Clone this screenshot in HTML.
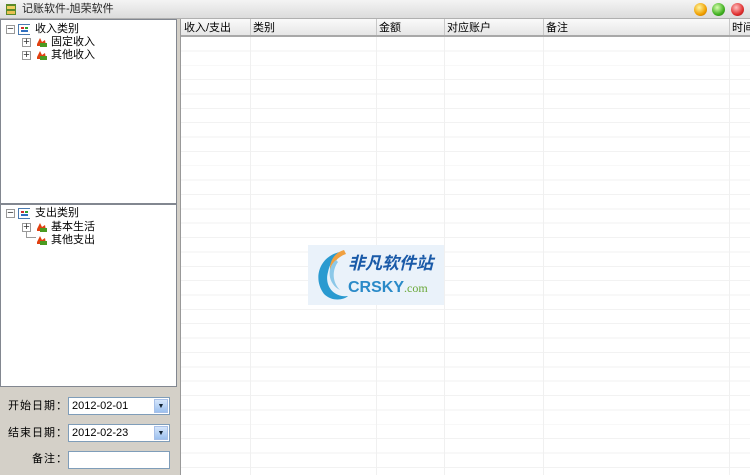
<!DOCTYPE html>
<html><head><meta charset="utf-8"><style>
*{margin:0;padding:0;box-sizing:border-box}
body{width:750px;height:475px;overflow:hidden;background:#d4d0c8;font-family:"Liberation Sans","Noto Sans CJK SC",sans-serif;font-size:11px;line-height:13px;color:#000;position:relative}
.abs{position:absolute;white-space:nowrap}
.title{left:0;top:0;width:750px;height:19px;background:linear-gradient(#f4f4f4,#dcdcdc);border-bottom:1px solid #b0b0b0}
.title span{position:absolute;left:22px;top:3px;font-size:11px;color:#222}
.btn{position:absolute;top:3px;width:13px;height:13px;border-radius:50%}
.panel{background:#fff;border:1px solid #828790}
.tree div{position:absolute;white-space:nowrap;font-size:11px}
.pm{position:absolute;width:9px;height:9px;border:1px solid #999;background:#fff;font-size:9px;line-height:7px;text-align:center;color:#333}
.ico{position:absolute;width:12px;height:11px}
.grid{left:180px;top:19px;width:570px;height:456px;background:#fff repeating-linear-gradient(#fff 0 13.4px,#f2f2f2 13.4px 14.36px);background-position:0 18px;border-left:1px solid #999}
.hdr{position:absolute;left:0;top:0;width:570px;height:18px;background:linear-gradient(#fafafa,#e6e6e6);border-bottom:2px solid #a8a8a8;overflow:hidden}
.hdr span{position:absolute;top:3px;font-size:11px;white-space:nowrap}
.vl{position:absolute;top:0;width:1px;height:456px;background:#f0f0f0}
.hs{position:absolute;top:0;width:1px;height:17px;background:#c8c8c8}
.inp{position:absolute;background:#fff;border:1px solid #7f9db9;height:18px;font-size:11px;padding:2px 3px;width:102px;left:68px}
.dd{position:absolute;right:1px;top:1px;width:14px;height:14px;background:linear-gradient(#d6e6fb,#9cc0ef);border:1px solid #a8c0e8;font-size:7px;text-align:center;line-height:13px;color:#123}
.lbl{position:absolute;font-size:11px;letter-spacing:1px}
</style></head><body>
<div class="abs title">
<svg class="abs" style="left:5px;top:3px" width="12" height="13"><rect x="1" y="1" width="10" height="11" fill="#5a8a2a"/><rect x="2" y="3" width="8" height="3" fill="#f0d060"/><rect x="2" y="8" width="8" height="3" fill="#e8c050"/></svg>
<span>记账软件-旭荣软件</span>
<div class="btn" style="left:694px;background:radial-gradient(circle at 40% 35%,#fff6a0,#f0a000 60%,#b06000)"></div>
<div class="btn" style="left:712px;background:radial-gradient(circle at 40% 35%,#d8ffb0,#40b020 60%,#207010)"></div>
<div class="btn" style="left:731px;background:radial-gradient(circle at 40% 35%,#ffc0c0,#e03030 60%,#901010)"></div>
</div>

<div class="abs panel tree" style="left:0;top:19px;width:177px;height:185px">
<div class="pm" style="left:5px;top:5px">−</div>
<svg class="ico" style="left:17px;top:4px" width="13" height="11"><rect x="0.5" y="0.5" width="12" height="10" fill="#fff" stroke="#4a7ab0"/><rect x="3" y="3" width="3" height="2" fill="#d03030"/><rect x="7" y="3" width="3" height="2" fill="#30a030"/><rect x="3" y="6" width="7" height="2" fill="#3070c0"/></svg>
<div style="left:34px;top:3px">收入类别</div>
<div class="pm" style="left:21px;top:18px">+</div>
<svg class="ico" style="left:34px;top:16px" width="13" height="12"><path d="M2 8 L5 2 L7 6 L10 4 L11 10 L2 10Z" fill="#e04010"/><rect x="5" y="7" width="8" height="5" fill="#4a9a20"/></svg>
<div style="left:50px;top:16px">固定收入</div>
<div class="pm" style="left:21px;top:31px">+</div>
<svg class="ico" style="left:34px;top:29px" width="13" height="12"><path d="M2 8 L5 2 L7 6 L10 4 L11 10 L2 10Z" fill="#e04010"/><rect x="5" y="7" width="8" height="5" fill="#4a9a20"/></svg>
<div style="left:50px;top:29px">其他收入</div>
</div>

<div class="abs panel tree" style="left:0;top:204px;width:177px;height:183px">
<div class="pm" style="left:5px;top:4px">−</div>
<svg class="ico" style="left:17px;top:3px" width="13" height="11"><rect x="0.5" y="0.5" width="12" height="10" fill="#fff" stroke="#4a7ab0"/><rect x="3" y="3" width="3" height="2" fill="#d03030"/><rect x="7" y="3" width="3" height="2" fill="#30a030"/><rect x="3" y="6" width="7" height="2" fill="#3070c0"/></svg>
<div style="left:34px;top:2px">支出类别</div>
<div class="pm" style="left:21px;top:18px">+</div>
<svg class="ico" style="left:34px;top:16px" width="13" height="12"><path d="M2 8 L5 2 L7 6 L10 4 L11 10 L2 10Z" fill="#e04010"/><rect x="5" y="7" width="8" height="5" fill="#4a9a20"/></svg>
<div style="left:50px;top:16px">基本生活</div>
<svg class="abs" style="left:25px;top:27px" width="10" height="8"><path d="M0.5 0 V5.5 H10" stroke="#999" fill="none"/></svg>
<svg class="ico" style="left:34px;top:29px" width="13" height="12"><path d="M2 8 L5 2 L7 6 L10 4 L11 10 L2 10Z" fill="#e04010"/><rect x="5" y="7" width="8" height="5" fill="#4a9a20"/></svg>
<div style="left:50px;top:29px">其他支出</div>
</div>

<div class="lbl" style="left:8px;top:400px">开始日期：</div>
<div class="inp" style="top:397px">2012-02-01<div class="dd">▼</div></div>
<div class="lbl" style="left:8px;top:427px">结束日期：</div>
<div class="inp" style="top:424px">2012-02-23<div class="dd">▼</div></div>
<div class="lbl" style="left:32px;top:453px">备注：</div>
<div class="inp" style="top:451px"></div>

<div class="abs grid">
<div class="vl" style="left:69px"></div><div class="vl" style="left:195px"></div><div class="vl" style="left:263px"></div><div class="vl" style="left:362px"></div><div class="vl" style="left:548px"></div>
<div class="hdr">
<span style="left:3px">收入/支出</span><div class="hs" style="left:69px"></div>
<span style="left:72px">类别</span><div class="hs" style="left:195px"></div>
<span style="left:198px">金额</span><div class="hs" style="left:263px"></div>
<span style="left:266px">对应账户</span><div class="hs" style="left:362px"></div>
<span style="left:365px">备注</span><div class="hs" style="left:548px"></div>
<span style="left:551px">时间</span>
</div>
<div class="abs" style="left:127px;top:226px;width:136px;height:60px;background:#eaf2fa;overflow:hidden">
<svg class="abs" style="left:2px;top:3px" width="40" height="54"><path d="M30 4 C10 8 2 30 14 46 C22 54 34 52 38 48 C24 50 14 38 18 24 C20 14 26 8 30 4Z" fill="#2a9ad0"/><path d="M34 2 C20 6 16 22 24 34 C18 22 24 10 36 6Z" fill="#f0a040"/><path d="M26 12 C16 20 18 36 30 42 C22 34 22 22 28 14Z" fill="#8cc8e8"/></svg>
<div class="abs" style="left:40px;top:9px;font-size:17px;line-height:20px;font-weight:bold;font-style:italic;color:#1a5aa8">非凡软件站</div>
<div class="abs" style="left:40px;top:33px;font-size:16px;line-height:20px;font-weight:bold;color:#2a8ac8">CRSKY<span style="font-size:12px;color:#6aa838;font-weight:normal;font-family:'Liberation Serif',serif">.com</span></div>
</div>
</div>
</body></html>
